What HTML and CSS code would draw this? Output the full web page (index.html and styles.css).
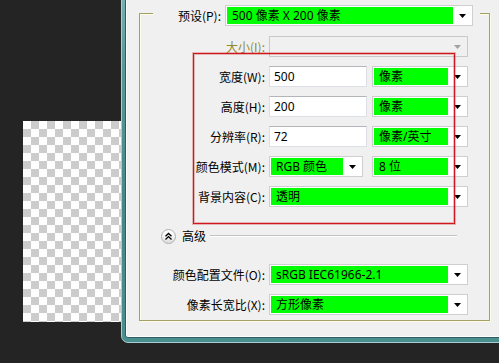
FILE: index.html
```html
<!DOCTYPE html>
<html>
<head>
<meta charset="utf-8">
<link rel="stylesheet" href="styles.css">
</head>
<body>
<div class="desk">
  <div class="canvas"></div>
  <div class="win">
    <div class="win-inner">
      <div class="group">
        <div class="row preset">
          <span class="lbl lbl-preset">预设(P):</span>
          <div class="sel w-preset"><span class="val">500 像素 X 200 像素</span><span class="arr"><svg width="7" height="4" viewBox="0 0 7 4"><path d="M0 0h7L3.5 4z"/></svg></span></div>
        </div>
        <div class="row first">
          <span class="lbl dis">大小(I):</span>
          <div class="sel w-full disabled"><span class="val"></span><span class="arr"><svg width="7" height="4" viewBox="0 0 7 4"><path d="M0 0h7L3.5 4z"/></svg></span></div>
        </div>
        <div class="row">
          <span class="lbl">宽度(W):</span>
          <div class="inp">500</div>
          <div class="sel w-unit gap5"><span class="val">像素</span><span class="arr"><svg width="7" height="4" viewBox="0 0 7 4"><path d="M0 0h7L3.5 4z"/></svg></span></div>
        </div>
        <div class="row">
          <span class="lbl">高度(H):</span>
          <div class="inp">200</div>
          <div class="sel w-unit gap5"><span class="val">像素</span><span class="arr"><svg width="7" height="4" viewBox="0 0 7 4"><path d="M0 0h7L3.5 4z"/></svg></span></div>
        </div>
        <div class="row">
          <span class="lbl">分辨率(R):</span>
          <div class="inp">72</div>
          <div class="sel w-unit gap5"><span class="val">像素/英寸</span><span class="arr"><svg width="7" height="4" viewBox="0 0 7 4"><path d="M0 0h7L3.5 4z"/></svg></span></div>
        </div>
        <div class="row">
          <span class="lbl">颜色模式(M):</span>
          <div class="sel w-mode"><span class="val">RGB 颜色</span><span class="arr"><svg width="7" height="4" viewBox="0 0 7 4"><path d="M0 0h7L3.5 4z"/></svg></span></div>
          <div class="sel w-unit gap10"><span class="val">8 位</span><span class="arr"><svg width="7" height="4" viewBox="0 0 7 4"><path d="M0 0h7L3.5 4z"/></svg></span></div>
        </div>
        <div class="row">
          <span class="lbl">背景内容(C):</span>
          <div class="sel w-full"><span class="val">透明</span><span class="arr"><svg width="7" height="4" viewBox="0 0 7 4"><path d="M0 0h7L3.5 4z"/></svg></span></div>
        </div>
        <div class="adv">
          <span class="circ"><svg width="15" height="15" viewBox="0 0 15 15"><path d="M4.5 7.2 L7.5 4.4 L10.5 7.2 M4.5 10.4 L7.5 7.6 L10.5 10.4" fill="none" stroke="#000" stroke-width="1.3"/></svg></span>
          <span class="adv-txt">高级</span>
          <span class="adv-line"></span>
        </div>
        <div class="row after-adv">
          <span class="lbl">颜色配置文件(O):</span>
          <div class="sel w-full"><span class="val">sRGB IEC61966-2.1</span><span class="arr"><svg width="7" height="4" viewBox="0 0 7 4"><path d="M0 0h7L3.5 4z"/></svg></span></div>
        </div>
        <div class="row">
          <span class="lbl">像素长宽比(X):</span>
          <div class="sel w-full"><span class="val">方形像素</span><span class="arr"><svg width="7" height="4" viewBox="0 0 7 4"><path d="M0 0h7L3.5 4z"/></svg></span></div>
        </div>
      </div>
    </div>
  </div>
  <div class="mark"></div>
</div>
</body>
</html>
```

FILE: styles.css
```css
* { box-sizing: border-box; }
html, body { margin: 0; padding: 0; }
body {
  background: #242424;
  font-family: "Noto Sans CJK SC", "Noto Sans", sans-serif;
  font-size: 12px;
  color: #000;
}
.desk {
  position: relative;
  width: 499px;
  height: 363px;
  overflow: hidden;
  background: #242424;
}
.canvas {
  position: absolute;
  left: 23px;
  top: 121px;
  width: 110px;
  height: 201px;
  background: repeating-conic-gradient(#cccccc 0 25%, #ffffff 0 50%) 0 0 / 16px 16px;
}
.win {
  position: absolute;
  left: 121px;
  top: -10px;
  width: 420px;
  height: 353px;
  border: 1px solid #a6cfcf;
  border-radius: 0 0 7px 7px;
  padding: 3px 3px 4px 3px;
  background: linear-gradient(180deg, #78b3b4 0%, #5a9a9b 20%, #468889 60%, #4a8f90 100%);
}
.win-inner {
  height: 100%;
  border: 1px solid #2c5f60;
  border-radius: 0 0 3px 3px;
  background: #f0f0f0;
  box-shadow: inset 1px 1px 0 #ffffff, inset -1px -1px 0 #ffffff;
  padding: 18px 0 0 13px;
}
.group {
  width: 351px;
  border: 1px solid #a4a06a;
  box-shadow: inset 1px 1px 0 #fdfde6, 1px 1px 0 #fdfde6;
  padding-bottom: 5px;
}
.row {
  display: flex;
  align-items: center;
  height: 21px;
  margin-top: 9px;
}
.row.preset {
  margin-top: -9px;
  margin-left: 13px;
  width: 327px;
  background: #f0f0f0;
}
.row.first { margin-top: 10px; }
.row.after-adv { margin-top: 20px; }
.lbl {
  width: 125px;
  text-align: right;
  white-space: nowrap;
  margin-right: 4px;
  line-height: 21px;
}
.lbl-preset { width: 68px; }
.lbl.dis { color: #8f8a30; }
.inp {
  width: 98px;
  height: 21px;
  background: #fff;
  border: 1px solid #dcdfe3;
  border-top-color: #b3b5b9;
  padding-left: 4px;
  line-height: 19px;
  font-family: "Noto Sans", "Noto Sans CJK SC", sans-serif;
}
.sel {
  display: flex;
  height: 21px;
  background: #fff;
  border: 1px solid #cfcfcf;
  padding: 1px;
}
.sel .val {
  flex: 1;
  background: #00ff00;
  padding-left: 5px;
  line-height: 17px;
  white-space: nowrap;
  overflow: hidden;
  font-family: "Noto Sans", "Noto Sans CJK SC", sans-serif;
}
.sel .arr {
  width: 18px;
  display: flex;
  align-items: center;
  justify-content: center;
}
.sel .arr svg { display: block; fill: #000; }
.sel.disabled { background: #f0f0f0; border-color: #c9c9c9; }
.sel.disabled .val { background: transparent; }
.sel.disabled .arr svg { fill: #a2a2a2; }
.w-preset { width: 248px; }
.w-full { width: 199px; }
.w-unit { width: 96px; }
.w-mode { width: 94px; }
.gap5 { margin-left: 5px; }
.gap10 { margin-left: 9px; }
.adv {
  display: flex;
  align-items: center;
  height: 16px;
  margin-top: 21px;
}
.circ {
  width: 15px;
  height: 15px;
  margin-left: 21px;
  border-radius: 50%;
  border: 1px solid #b0b0b0;
  background: linear-gradient(180deg, #ffffff 0%, #f3f3f3 50%, #dcdcdc 100%);
  display: flex;
  align-items: center;
  justify-content: center;
}
.circ svg { display: block; flex: none; }
.adv-txt {
  margin-left: 6px;
  line-height: 16px;
}
.adv-line {
  margin-left: 4px;
  width: 247px;
  height: 2px;
  border-top: 1px solid #c3c3c3;
  border-bottom: 1px solid #ffffff;
}
.mark {
  position: absolute;
  left: 193px;
  top: 53px;
  width: 262px;
  height: 171px;
  border: 1px solid #d0161e;
  box-shadow: 0 0 0 1px rgba(210, 40, 40, 0.3), inset 0 0 0 1px rgba(210, 40, 40, 0.3);
}
```
